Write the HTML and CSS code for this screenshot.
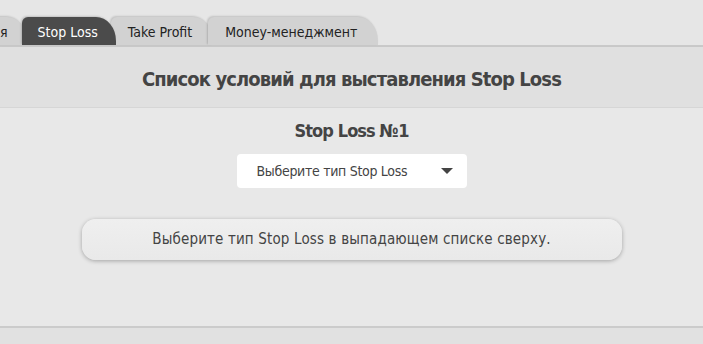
FILE: index.html
```html
<!DOCTYPE html>
<html lang="ru">
<head>
    <meta charset="UTF-8">
    <meta name="viewport" content="width=device-width, initial-scale=1.0">
    <title>Stop Loss</title>
    <link rel="stylesheet" href="styles.css">
</head>
<body>
    <div class="tabs">
        <div class="tab tab-cut">я</div>
        <div class="tab active">Stop Loss</div>
        <div class="tab">Take Profit</div>
        <div class="tab">Money-менеджмент</div>
    </div>
    <div class="panel">
        <h1 class="panel-title">Список условий для выставления Stop Loss</h1>
        <div class="panel-body">
            <h2 class="rule-title">Stop Loss №1</h2>
            <div class="select">
                <span>Выберите тип Stop Loss</span>
                <span class="arrow"></span>
            </div>
            <div class="notice">Выберите тип Stop Loss в выпадающем списке сверху.</div>
        </div>
    </div>
</body>
</html>
```

FILE: styles.css
```css
body {
    font-family: 'Liberation Sans Narrow', 'DejaVu Sans Condensed', sans-serif;
    background-color: #e1e1e1;
    color: #444;
    margin: 0;
    padding: 0;
    overflow: hidden;
}
.tabs {
    display: flex;
    align-items: flex-end;
    height: 45px;
    background-color: #e6e6e6;
    border-bottom: 2px solid #c9c9c9;
}
.tab {
    position: relative;
    height: 28px;
    line-height: 30px;
    padding: 0 21px 0 17px;
    margin-right: -5px;
    font-size: 14px;
    color: #222;
    background-color: #d2d2d2;
    border-radius: 6px 20px 0 0 / 6px 24px 0 0;
    box-shadow: -1px -1px 2px rgba(0, 0, 0, 0.16);
}
.tab-cut {
    margin-left: -16px;
    padding: 0 19px 0 16px;
}
.tab.active {
    z-index: 2;
    padding-left: 16px;
    padding-right: 18px;
    background-color: #4b4b4b;
    color: #fff;
}
.panel {
    background-color: #e8e8e8;
    border-bottom: 2px solid #cbcbcb;
    box-shadow: 0 2px 3px rgba(0, 0, 0, 0.08);
}
.panel-title {
    margin: 0;
    height: 60px;
    line-height: 64px;
    text-align: center;
    font-size: 20px;
    letter-spacing: -0.9px;
    font-weight: bold;
    color: #444;
    background-color: #e0e0e0;
    border-bottom: 1px solid #d6d6d6;
}
.panel-body {
    display: flex;
    flex-direction: column;
    align-items: center;
    padding: 11px 0 66px;
}
.rule-title {
    margin: 0 0 11px;
    font-size: 18px;
    letter-spacing: -0.9px;
    font-weight: bold;
    color: #444;
    line-height: 24px;
}
.select {
    display: flex;
    justify-content: space-between;
    align-items: center;
    width: 230px;
    height: 34px;
    box-sizing: border-box;
    padding: 0 14px 0 20px;
    background-color: #fff;
    border-radius: 4px;
    font-size: 14px;
    letter-spacing: -0.3px;
    color: #444;
}
.arrow {
    width: 0;
    height: 0;
    border-left: 6px solid transparent;
    border-right: 6px solid transparent;
    border-top: 6px solid #444;
}
.notice {
    margin-top: 31px;
    width: 540px;
    height: 41px;
    line-height: 41px;
    text-align: center;
    font-size: 15px;
    letter-spacing: 0.15px;
    color: #444;
    border-radius: 14px;
    background: linear-gradient(#efefef, #e9e9e9);
    box-shadow: 0 1px 4px rgba(0, 0, 0, 0.3);
}
```
